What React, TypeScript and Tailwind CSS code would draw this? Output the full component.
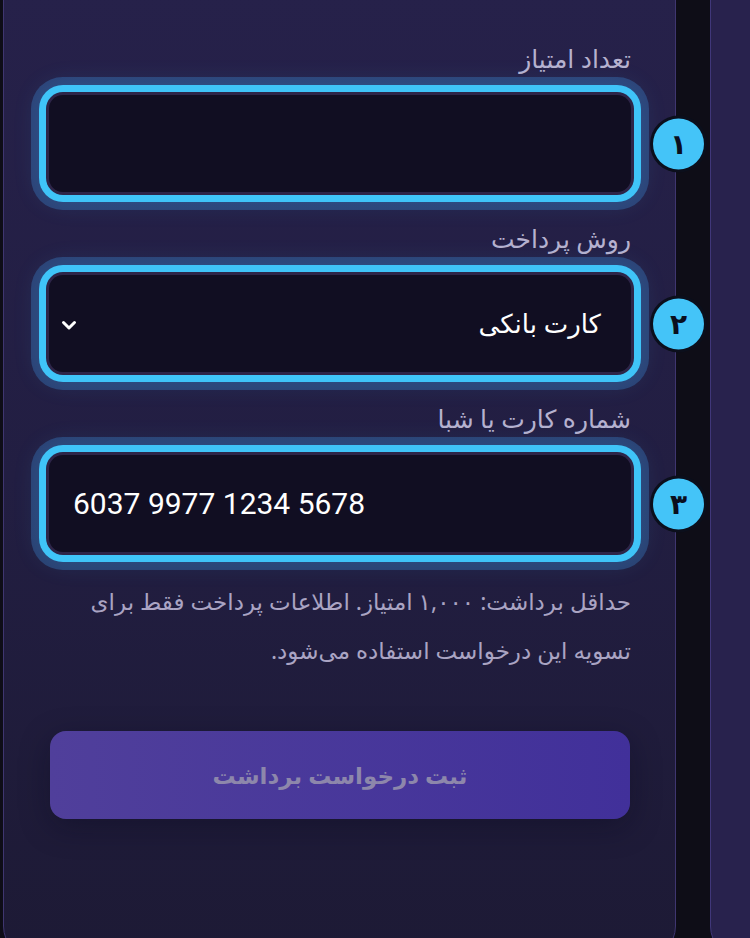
import type { ReactNode } from 'react'

const glow =
  'shadow-[0_0_0_3px_#2d2548,0_0_0_10px_#3fc4f8,0_0_0_18px_rgba(63,150,230,0.3),0_0_28px_8px_rgba(63,170,240,0.2)]'

function Badge({ n }: { n: string }) {
  return (
    <div className="absolute right-[-76px] top-1/2 -translate-y-1/2 w-[57px] h-[57px] rounded-full bg-[#0b0f1c] p-[3px]">
      <div className="w-full h-full rounded-full bg-[#44c4f8] flex items-center justify-center text-[#0a0f1e] text-[28px] font-bold leading-none pb-[2px]">
        {n}
      </div>
    </div>
  )
}

function Field({ label, n, children }: { label: string; n: string; children: ReactNode }) {
  return (
    <div className="flex flex-col">
      <label className="text-[25px] leading-[30px] text-[#b7b2cf] mb-[22px]">{label}</label>
      <div className="relative">
        <div className={`h-[97px] rounded-[14px] bg-[#110e22] ${glow}`}>{children}</div>
        <Badge n={n} />
      </div>
    </div>
  )
}

export default function App() {
  return (
    <div className="h-[938px] w-[750px] overflow-hidden bg-[#0e0d17] flex font-['Noto_Sans','DejaVu_Sans',sans-serif]">
      <div
        dir="rtl"
        className="shrink-0 w-[673px] ml-[3px] h-[970px] -mt-[10px] rounded-b-[34px] border border-[#3f3670] bg-gradient-to-b from-[#26214a] via-[#221e42] to-[#1d1a35] pt-[52px] pl-[45px] pr-[44px]"
      >
        <div className="flex flex-col gap-[31px]">
          <Field label="تعداد امتیاز" n="۱">
            <input
              readOnly
              className="w-full h-full bg-transparent outline-none px-[22px] text-white text-[26px]"
            />
          </Field>
          <Field label="روش پرداخت" n="۲">
            <div className="h-full flex items-center justify-between pr-[30px] pl-[12px]">
              <span className="text-white text-[26px]">کارت بانکی</span>
              <svg width="16" height="12" viewBox="0 0 16 12" className="mt-[2px]">
                <path d="M2.5 3.5 L8 9 L13.5 3.5" fill="none" stroke="white" strokeWidth="3" strokeLinecap="round" strokeLinejoin="round" />
              </svg>
            </div>
          </Field>
          <Field label="شماره کارت یا شبا" n="۳">
            <input
              readOnly
              dir="ltr"
              value="6037 9977 1234 5678"
              className="w-full h-full bg-transparent outline-none pl-[24px] text-white text-[30px] font-['Roboto',sans-serif] text-left"
            />
          </Field>
        </div>
        <p className="mt-[25px] text-[23px] leading-[49px] text-[#aaa4c3]">
          حداقل برداشت: ۱,۰۰۰ امتیاز. اطلاعات پرداخت فقط برای تسویه این درخواست استفاده می‌شود.
        </p>
        <button className="mt-[56px] w-[580px] mr-[1px] h-[88px] rounded-[16px] bg-gradient-to-r from-[#503f9b] to-[#41309a] text-[#8d87ab] text-[23px] font-bold shadow-[0_8px_30px_rgba(10,8,30,0.35)]">
          ثبت درخواست برداشت
        </button>
      </div>
      <div className="shrink-0 w-[80px] ml-[34px] h-[970px] -mt-[10px] rounded-bl-[34px] border border-[#40377a] bg-[#28224d]" />
    </div>
  )
}
